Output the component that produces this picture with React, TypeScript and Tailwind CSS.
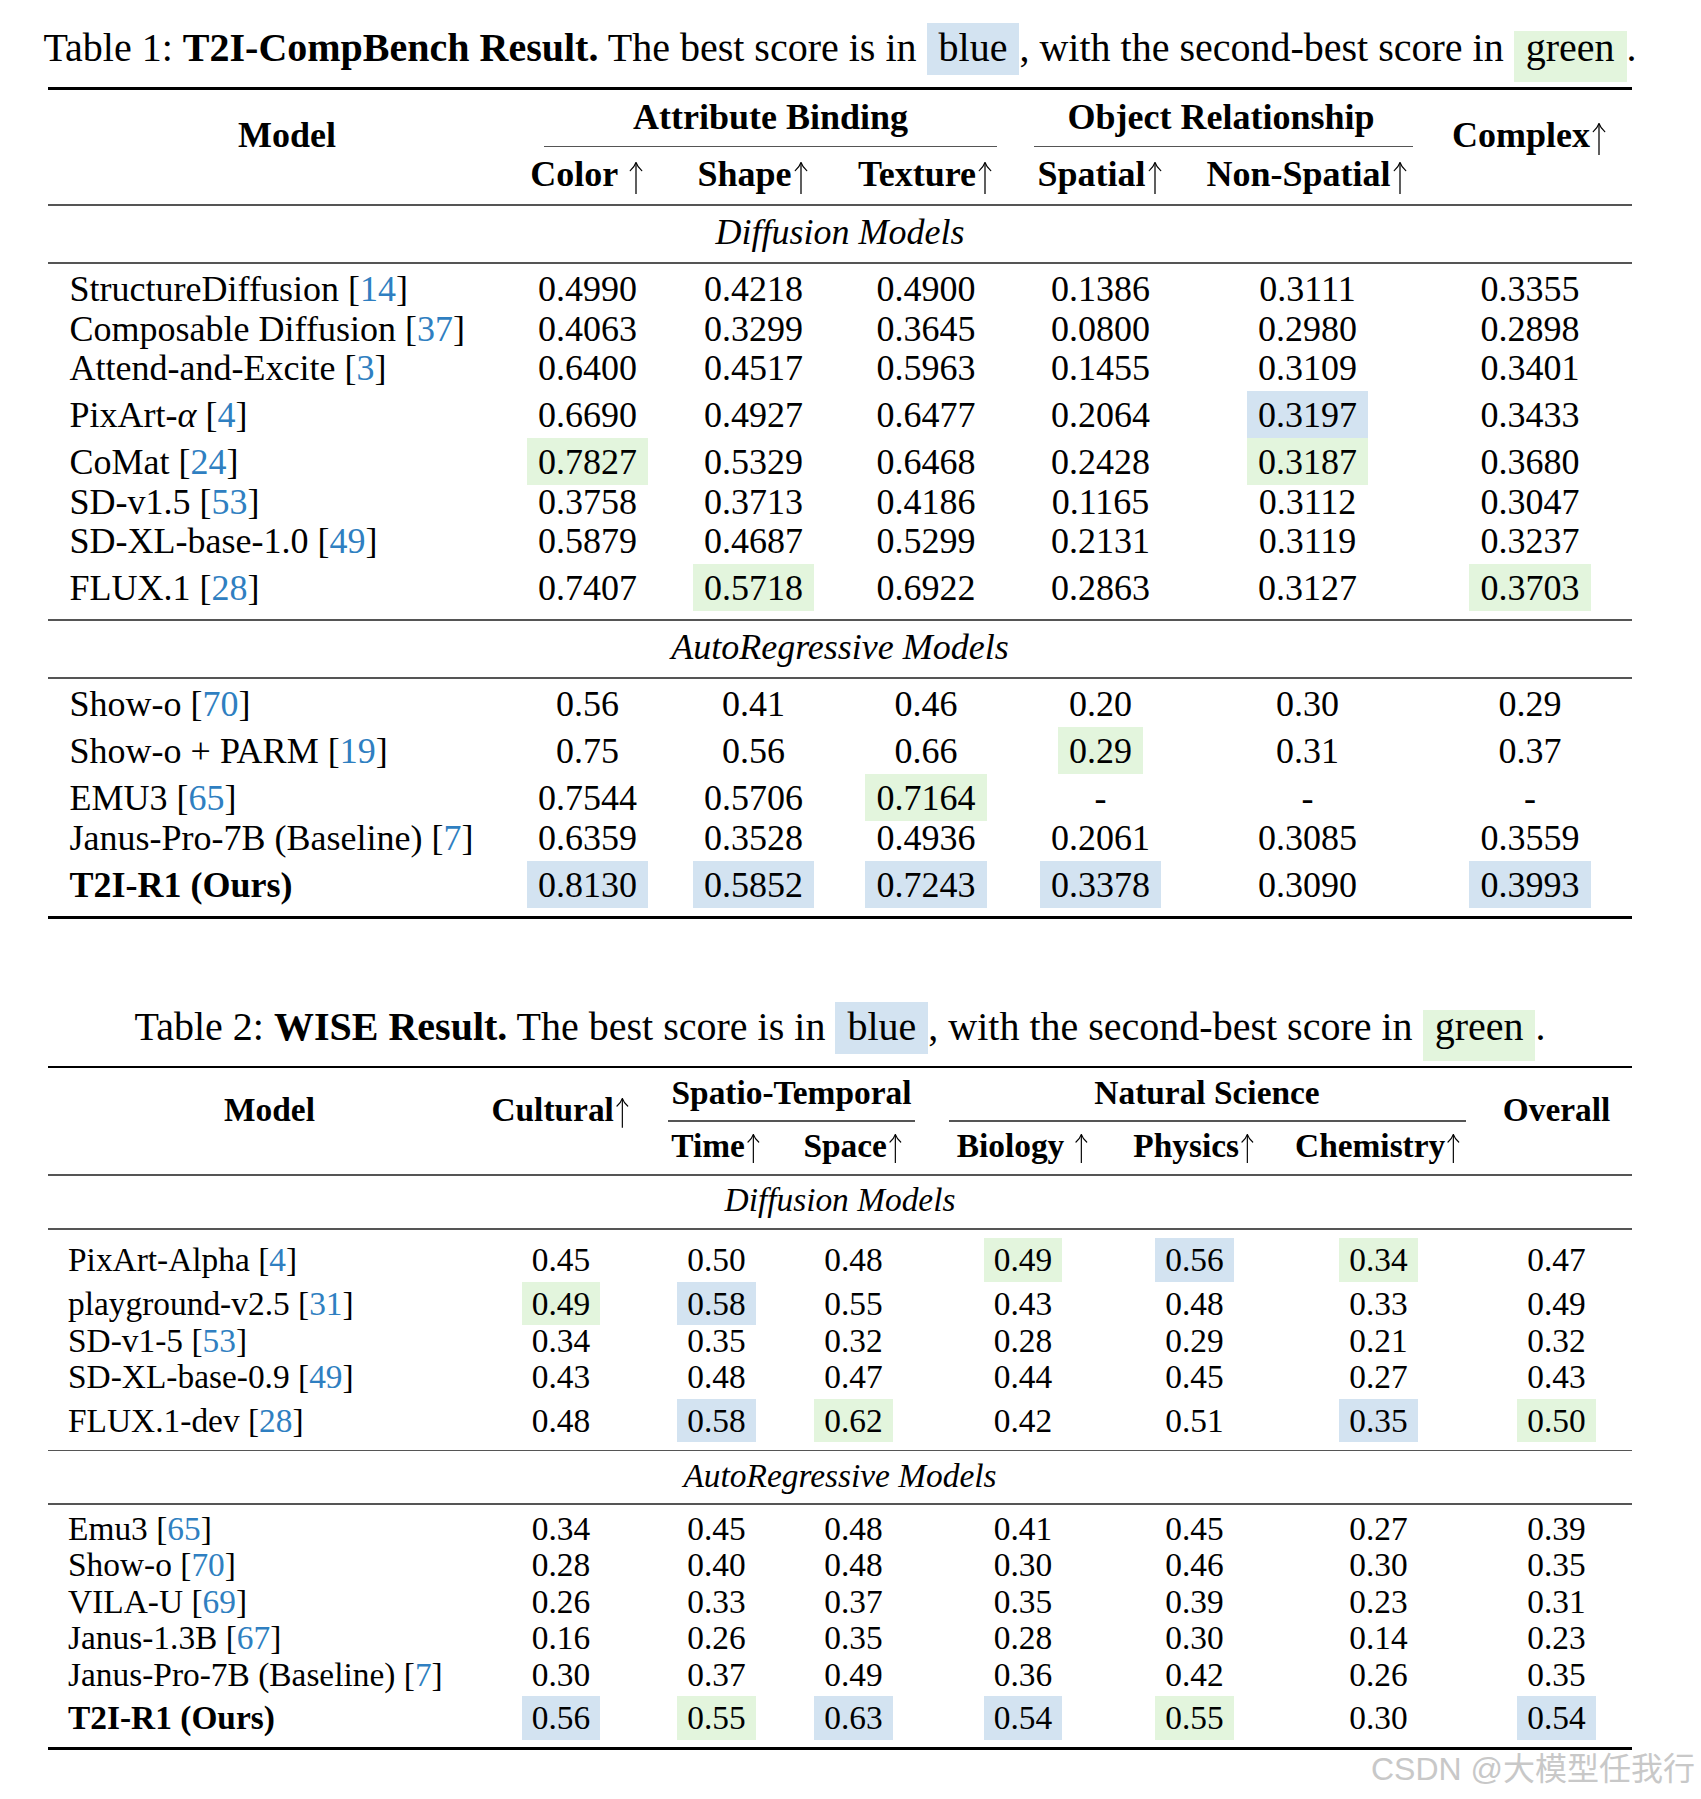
import React from 'react';

// value strings ending in "b" are best (blue), "g" second best (green)
type ModelRow = { name: React.ReactNode; cite?: string; bold?: boolean; vals: string[] };
type Section = { title: string; rows: ModelRow[] };

const BLUE = 'bg-[#d3e3f1]';
const GREEN = 'bg-[#e3f5dd]';

// thin math-style \uparrow
const Up = () => (
  <svg viewBox="0 0 50 89" className="inline-block w-[0.5em] h-[0.89em] align-[-0.2em]" fill="none" stroke="currentColor">
    <path d="M25 4 V89" strokeWidth="3.5" />
    <path d="M9 24 C17 17 22 10 25 1 C28 10 33 17 41 24" strokeWidth="3.5" strokeLinecap="round" />
  </svg>
);

const Cite = ({ n }: { n: string }) => (
  <>
    {' '}[<span className="text-[#2f7fc1]">{n}</span>]
  </>
);

const NumCell = ({ v }: { v: string }) => {
  const hl = v.endsWith('b') ? 'b' : v.endsWith('g') ? 'g' : '';
  const text = hl ? v.slice(0, -1) : v;
  return (
    <div className="flex items-end justify-center">
      <span
        className={
          hl
            ? `leading-[0.722em] pt-[0.306em] pb-[0.278em] px-[0.306em] ${hl === 'b' ? BLUE : GREEN}`
            : 'leading-[0.722em] pb-[0.278em]'
        }
      >
        {text}
      </span>
    </div>
  );
};

const Row = ({ cols, row }: { cols: string; row: ModelRow }) => {
  const boxed = row.vals.some(v => v.endsWith('b') || v.endsWith('g'));
  return (
    <div className={`grid ${cols} ${boxed ? 'h-[1.306em]' : 'h-[1.094em]'}`}>
      <div className="flex items-end pl-[0.6em]">
        <span className={`leading-[0.722em] pb-[0.278em] whitespace-nowrap ${row.bold ? 'font-bold' : ''}`}>
          {row.name}
          {row.cite && <Cite n={row.cite} />}
        </span>
      </div>
      {row.vals.map((v, i) => (
        <NumCell key={i} v={v} />
      ))}
    </div>
  );
};

const Caption = ({ num, title }: { num: string; title: string }) => (
  <div className="flex justify-center whitespace-nowrap w-[1584px] ml-[48px] text-[40px] leading-[40px]">
    <p>
      Table {num}: <b>{title}</b> The best score is in{' '}
      <span className={`inline-block leading-[26px] pt-[12px] pb-[14px] px-[12px] ${BLUE}`}>blue</span>, with the
      second-best score in{' '}
      <span className={`inline-block leading-[26px] pt-[4px] pb-[21px] px-[12px] ${GREEN}`}>green</span>.
    </p>
  </div>
);

const Table = ({
  size,
  cols,
  header,
  sections,
}: {
  size: string;
  cols: string;
  header: React.ReactNode;
  sections: Section[];
}) => (
  <div className={`${size} w-[1584px] ml-[48px] mt-[5px]`}>
    <div className="h-[0.083em] bg-black" />
    {header}
    {sections.map(s => (
      <React.Fragment key={s.title}>
        <div className="h-[0.056em] bg-[#555]" />
        <div className="h-[1.556em] pt-[0.22em] text-center italic leading-[1em]">{s.title}</div>
        <div className="h-[0.056em] bg-[#555]" />
        <div className="pt-[0.25em] pb-[0.222em]">
          {s.rows.map((r, i) => (
            <Row key={i} cols={cols} row={r} />
          ))}
        </div>
      </React.Fragment>
    ))}
    <div className="h-[0.083em] bg-black" />
  </div>
);

const COLS1 = 'grid-cols-[458px_163px_169px_176px_173px_241px_204px]';
const COLS2 = 'grid-cols-[415px_196px_115px_159px_180px_163px_205px_151px]';

const header1 = (
  <div className={`grid ${COLS1} grid-rows-[1.597em_1.569em] font-bold leading-[1em]`}>
    <div className="row-span-2 pt-[0.76em] pl-[20px] text-center">Model</div>
    <div className="col-span-3 flex flex-col justify-between pt-[0.24em]">
      <div className="text-center pl-[21px]">Attribute Binding</div>
      <div className="h-[0.042em] bg-[#555] ml-[38px] mr-[17px]" />
    </div>
    <div className="col-span-2 flex flex-col justify-between pt-[0.24em]">
      <div className="text-center">Object Relationship</div>
      <div className="h-[0.042em] bg-[#555] ml-[20px] mr-[15px]" />
    </div>
    <div className="row-span-2 pt-[0.76em] text-center">
      Complex<Up />
    </div>
    <div className="pt-[0.25em] text-center">
      Color <Up />
    </div>
    <div className="pt-[0.25em] text-center">
      Shape<Up />
    </div>
    <div className="pt-[0.25em] text-center">
      Texture<Up />
    </div>
    <div className="pt-[0.25em] text-center">
      Spatial<Up />
    </div>
    <div className="pt-[0.25em] text-center">
      Non-Spatial<Up />
    </div>
  </div>
);

const header2 = (
  <div className={`grid ${COLS2} grid-rows-[1.597em_1.569em] font-bold leading-[1em]`}>
    <div className="row-span-2 pt-[0.736em] pl-[28px] text-center">Model</div>
    <div className="row-span-2 pt-[0.736em] text-center">
      Cultural<Up />
    </div>
    <div className="col-span-2 flex flex-col justify-between pt-[0.218em]">
      <div className="text-center pr-[9px]">Spatio-Temporal</div>
      <div className="h-[0.042em] bg-[#555] ml-[9px] mr-[18px]" />
    </div>
    <div className="col-span-3 flex flex-col justify-between pt-[0.218em]">
      <div className="text-center">Natural Science</div>
      <div className="h-[0.042em] bg-[#555] ml-[16px] mr-[15px]" />
    </div>
    <div className="row-span-2 pt-[0.736em] text-center">Overall</div>
    <div className="pt-[0.204em] text-center">
      Time<Up />
    </div>
    <div className="pt-[0.204em] text-center">
      Space<Up />
    </div>
    <div className="pt-[0.204em] text-center">
      Biology <Up />
    </div>
    <div className="pt-[0.204em] text-center">
      Physics<Up />
    </div>
    <div className="pt-[0.204em] text-center">
      Chemistry<Up />
    </div>
  </div>
);

const sections1: Section[] = [
  {
    title: 'Diffusion Models',
    rows: [
      { name: 'StructureDiffusion', cite: '14', vals: ['0.4990', '0.4218', '0.4900', '0.1386', '0.3111', '0.3355'] },
      { name: 'Composable Diffusion', cite: '37', vals: ['0.4063', '0.3299', '0.3645', '0.0800', '0.2980', '0.2898'] },
      { name: 'Attend-and-Excite', cite: '3', vals: ['0.6400', '0.4517', '0.5963', '0.1455', '0.3109', '0.3401'] },
      {
        name: (
          <>
            PixArt-<i>α</i>
          </>
        ),
        cite: '4',
        vals: ['0.6690', '0.4927', '0.6477', '0.2064', '0.3197b', '0.3433'],
      },
      { name: 'CoMat', cite: '24', vals: ['0.7827g', '0.5329', '0.6468', '0.2428', '0.3187g', '0.3680'] },
      { name: 'SD-v1.5', cite: '53', vals: ['0.3758', '0.3713', '0.4186', '0.1165', '0.3112', '0.3047'] },
      { name: 'SD-XL-base-1.0', cite: '49', vals: ['0.5879', '0.4687', '0.5299', '0.2131', '0.3119', '0.3237'] },
      { name: 'FLUX.1', cite: '28', vals: ['0.7407', '0.5718g', '0.6922', '0.2863', '0.3127', '0.3703g'] },
    ],
  },
  {
    title: 'AutoRegressive Models',
    rows: [
      { name: 'Show-o', cite: '70', vals: ['0.56', '0.41', '0.46', '0.20', '0.30', '0.29'] },
      { name: 'Show-o + PARM', cite: '19', vals: ['0.75', '0.56', '0.66', '0.29g', '0.31', '0.37'] },
      { name: 'EMU3', cite: '65', vals: ['0.7544', '0.5706', '0.7164g', '-', '-', '-'] },
      { name: 'Janus-Pro-7B (Baseline)', cite: '7', vals: ['0.6359', '0.3528', '0.4936', '0.2061', '0.3085', '0.3559'] },
      { name: 'T2I-R1 (Ours)', bold: true, vals: ['0.8130b', '0.5852b', '0.7243b', '0.3378b', '0.3090', '0.3993b'] },
    ],
  },
];

const sections2: Section[] = [
  {
    title: 'Diffusion Models',
    rows: [
      { name: 'PixArt-Alpha', cite: '4', vals: ['0.45', '0.50', '0.48', '0.49g', '0.56b', '0.34g', '0.47'] },
      { name: 'playground-v2.5', cite: '31', vals: ['0.49g', '0.58b', '0.55', '0.43', '0.48', '0.33', '0.49'] },
      { name: 'SD-v1-5', cite: '53', vals: ['0.34', '0.35', '0.32', '0.28', '0.29', '0.21', '0.32'] },
      { name: 'SD-XL-base-0.9', cite: '49', vals: ['0.43', '0.48', '0.47', '0.44', '0.45', '0.27', '0.43'] },
      { name: 'FLUX.1-dev', cite: '28', vals: ['0.48', '0.58b', '0.62g', '0.42', '0.51', '0.35b', '0.50g'] },
    ],
  },
  {
    title: 'AutoRegressive Models',
    rows: [
      { name: 'Emu3', cite: '65', vals: ['0.34', '0.45', '0.48', '0.41', '0.45', '0.27', '0.39'] },
      { name: 'Show-o', cite: '70', vals: ['0.28', '0.40', '0.48', '0.30', '0.46', '0.30', '0.35'] },
      { name: 'VILA-U', cite: '69', vals: ['0.26', '0.33', '0.37', '0.35', '0.39', '0.23', '0.31'] },
      { name: 'Janus-1.3B', cite: '67', vals: ['0.16', '0.26', '0.35', '0.28', '0.30', '0.14', '0.23'] },
      { name: 'Janus-Pro-7B (Baseline)', cite: '7', vals: ['0.30', '0.37', '0.49', '0.36', '0.42', '0.26', '0.35'] },
      { name: 'T2I-R1 (Ours)', bold: true, vals: ['0.56b', '0.55g', '0.63b', '0.54b', '0.55g', '0.30', '0.54b'] },
    ],
  },
];

export default function App() {
  return (
    <div className="relative min-h-[1799px] w-[1701px] bg-white text-black font-['Liberation_Serif','Times_New_Roman',serif] pt-[23px]">
      <Caption num="1" title="T2I-CompBench Result." />
      <Table size="text-[36px]" cols={COLS1} header={header1} sections={sections1} />

      <div className="mt-[83px]">
        <Caption num="2" title="WISE Result." />
      </div>
      <Table size="text-[33.4px]" cols={COLS2} header={header2} sections={sections2} />

      <div className="absolute right-[6px] top-[1753px] text-[32px] leading-[32px] text-[#c8c8c8] font-['Liberation_Sans','Noto_Sans_CJK_SC',sans-serif]">
        CSDN @大模型任我行
      </div>
    </div>
  );
}
